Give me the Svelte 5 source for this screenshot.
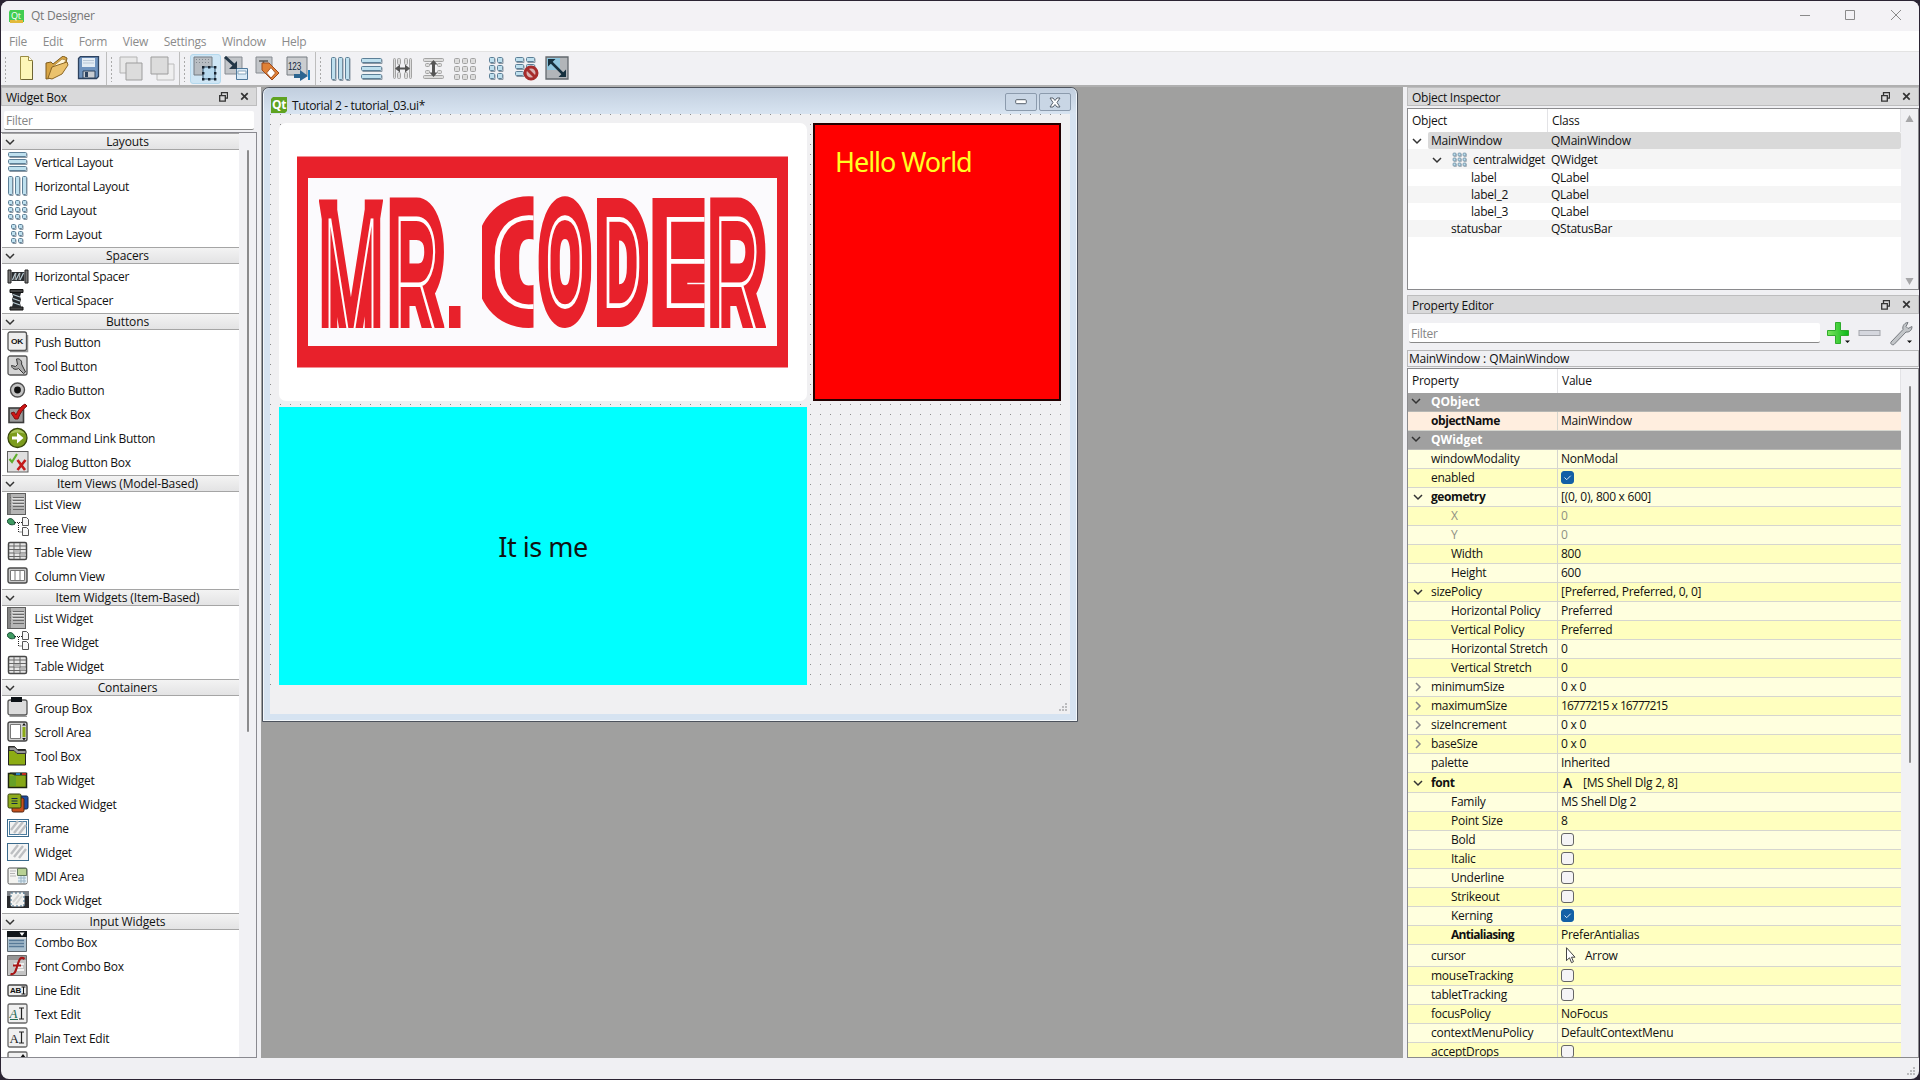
<script>
  const bar = (x, y, w, h) =>
    `<rect x="${x + 0.5}" y="${y + 0.5}" width="${w - 1}" height="${h - 1}" rx="1" fill="#bfe0ee" stroke="#5c7f97"/><path d="M${x + w} ${y + 1.5}v${h - 1}h-${w - 1.5}" fill="none" stroke="#8b98a3"/>`;
  const gbar = (x, y, w, h) =>
    `<rect x="${x + 0.5}" y="${y + 0.5}" width="${w - 1}" height="${h - 1}" rx="1" fill="#dcdcdc" stroke="#a3a3a3"/>`;
  const cells = (xs, ys, fn, w = 6, h = 6) => ys.map((y) => xs.map((x) => fn(x, y, w, h)).join('')).join('');
  const hatch = '<path d="M4 13l7-9M7 16l9-11M12 17l7-9" stroke="#bdbfc2" stroke-width="2.4" fill="none"/>';
  const list =
    '<rect x="0.5" y="0.5" width="18" height="21" fill="#b5b5b5" stroke="#5e5e5e"/><path d="M1 1h3v20H1z" fill="#858585"/><path d="M3 4.5h1m2 0h11M3 7.5h1m2 0h11M3 10.5h1m2 0h11M3 13.5h1m2 0h11M3 16.5h1m2 0h11" stroke="#696969"/><path d="M5 5.5h12M5 8.5h12M5 11.5h12" stroke="#dedede"/>';
  const tree =
    '<path d="M0 4c2-4 7-3 8 3-4 2-7 0-8-3z" fill="#3f9b62" stroke="#174c33"/><path d="M8 5.5h7M11.5 6v9h4" fill="none" stroke="#222" stroke-dasharray="1 1"/><path d="M15.5.5h4l2 2v6h-6zM15.5 10.5h4l2 2v6h-6z" fill="#f7f7f7" stroke="#555"/>';
  const table =
    '<rect x="1.5" y="1.5" width="18" height="17" rx="1.5" fill="#e6e6e6" stroke="#484848" stroke-width="1.5"/><path d="M2 5h17M2 8.5h17M2 12h17M2 15.5h17M7 2v16M13 2v16" stroke="#666"/><path d="M7.5 9h5v3h-5zM13.5 12.5h5v3h-5z" fill="#b9b9b9"/>';

  const icons = {
    vlay: bar(1, 1, 19, 5) + bar(1, 8, 19, 5) + bar(1, 15, 19, 5),
    hlay: bar(1, 1, 5, 19) + bar(8, 1, 5, 19) + bar(15, 1, 5, 19),
    grid: cells([1, 8, 15], [1, 8, 15], bar, 5, 5),
    form: cells([4, 11], [1, 8, 15], bar, 5, 5),
    hspacer:
      '<path d="M1 5h3v13H1zM18 5h3v13h-3z" fill="#777" stroke="#222"/><path d="M4.5 7h13v9h-13z" fill="#2a2d30"/><path d="M5.5 15l3-7M9 15l3.5-7M13 15l3.5-7" stroke="#b7cad2" stroke-width="1.2"/><path d="M8 15l1-7M12 15l1-7" stroke="#fff" stroke-width=".6"/>',
    vspacer:
      '<path d="M3 .5h13v3H3zM3 18h13v3H3z" fill="#444" stroke="#111"/><path d="M5 4h9l-1 3.5 1 3-1 3.5 1 4H5l1-4-1-3.5 1-3z" fill="#26292c"/><path d="M6 5.5l7 2.5M6 9.5l7 2.5M6 13.5l7 2.5" stroke="#b7cad2" stroke-width="1.3"/>',
    push: '<path d="M3 20.5h17.5V4" fill="none" stroke="#999" stroke-width="1.5"/><rect x="1" y="1" width="18.5" height="18.5" rx="2" fill="#ededed" stroke="#555" stroke-width="1.3"/><text x="4" y="12.5" font-size="7.5" font-family="Liberation Sans" font-weight="700" fill="#111" textLength="12" lengthAdjust="spacingAndGlyphs">OK</text>',
    tool: '<rect x="1" y="1" width="19" height="19" rx="2" fill="#d5d5d5" stroke="#555" stroke-width="1.3"/><path d="M9.5 4c3-1 6 2 5 5l4 8-2 1.5-5-5c-3 2-7 0-7-3l4 1 2-2z" fill="#aaa" stroke="#333"/>',
    radio: '<circle cx="10.5" cy="11" r="7" fill="#c4c4c4" stroke="#4f4f4f" stroke-width="1.4"/><circle cx="10.5" cy="11" r="3.4" fill="#111"/>',
    check: '<rect x="2" y="5" width="14.5" height="14.5" fill="#9b9b9b" stroke="#3c3c3c" stroke-width="1.6"/><path d="M4 10l3-1 2 3c2-5 5-9 9-11l2 2c-4 3-7 7-9 13H8z" fill="#cf1414" stroke="#801010"/>',
    command: '<circle cx="10.5" cy="11" r="9.5" fill="#7c9c1c" stroke="#39480c" stroke-width="1.3"/><path d="M3 7c3-6 12-6 15 0-4-2-11-2-15 0z" fill="#a9c35b"/><path d="M5 9.5h5V5.5l6.5 5.5-6.5 5.5v-4H5z" fill="#fff"/>',
    dialog: '<rect x=".5" y=".5" width="20.5" height="20.5" fill="#dfdfdf" stroke="#5e5e5e"/><path d="M2.5 8l2.5 3 5-8" fill="none" stroke="#5fae2c" stroke-width="2.2"/><path d="M10.5 9l7.5 10M18.5 9l-8 10" stroke="#c31b1b" stroke-width="2.6"/>',
    list, tree, table,
    column: '<rect x="1" y="3" width="19" height="15" rx="2" fill="#c9c9c9" stroke="#4b4b4b" stroke-width="1.4"/><path d="M3.5 5.5h14v10h-14z" fill="#fff" stroke="#777"/><path d="M8 5v11M13 5v11" stroke="#777"/>',
    group: '<rect x="1" y="3" width="19" height="15" rx="2" fill="#dcdcdc" stroke="#555" stroke-width="1.3"/><path d="M2.5 19.5H20" stroke="#999"/><path d="M4 0h11v5H4z" fill="#0d1216"/>',
    scroll: '<rect x="1" y="1" width="19" height="19" rx="2" fill="#d2d2d2" stroke="#444" stroke-width="1.4"/><path d="M3.5 3.5h10v14h-10z" fill="#fff" stroke="#777"/><path d="M15.5 6h3v10h-3z" fill="#8cab16"/><path d="M17 2l1.8 2.5h-3.6zM17 19.5l1.8-2.5h-3.6z" fill="#111"/>',
    toolbox: '<path d="M1.5 1.5h6l2 3h9V20h-17z" fill="#8dac14" stroke="#222"/><path d="M2 2h6l3 3.5h8v3h-9l-3-3H2z" fill="#999" stroke="#333"/>',
    tab: '<path d="M1.5 4.5h18v14h-18z" fill="#86a716" stroke="#1d2410" stroke-width="1.5"/><path d="M2.5 3.5h17v3h-12z" fill="#22332d"/><path d="M9 4h4v2H9z" fill="#287fbd"/><path d="M15 4h4v2h-4z" fill="#c22b1d"/><path d="M3 7h6v10H3z" fill="#67a128"/>',
    stack: '<rect x="9" y="3" width="12" height="13" rx="1.5" fill="#1c4ba3" stroke="#142544"/><rect x="5" y="5" width="12" height="14" rx="1.5" fill="#c6501c" stroke="#4f2512"/><rect x="1" y="1" width="13" height="14" rx="1.5" fill="#8fac1c" stroke="#323c0d"/><path d="M4.5 5.5h6M4.5 8h6M4.5 10.5h6" stroke="#132d42"/>',
    frame: `<rect x=".5" y="2.5" width="21" height="17" fill="#fff" stroke="#3a6a8c"/><rect x="2.5" y="4.5" width="17" height="13" fill="#f2f2f2" stroke="#4e7ea0"/>${hatch}`,
    widget: `<rect x=".5" y="2.5" width="21" height="17" fill="#f4f4f4" stroke="#3a6a8c"/>${hatch}`,
    mdi: '<rect x="1" y="3" width="19" height="16" rx="1.5" fill="#f3f3f0" stroke="#555"/><path d="M3 6h6M3 8.5h5M3 11h6" stroke="#b5b5b5"/><path d="M10.5 3.5h9v7h-9z" fill="#b8d194" stroke="#61785a"/><path d="M11 11h9v7h-9z" fill="#e0edf5"/><path d="M11 13h8M11 16h8M14 11v7M17 11v7" stroke="#9bb5c6"/>',
    dock: '<path d="M0 2h22v17H0z" fill="#28292c"/><path d="M0 2h22v5H0z" fill="#7d8085"/><rect x="4" y="4" width="13" height="13" rx="1" fill="#f1f1ef" stroke="#fff"/><rect x="4" y="4" width="13" height="13" fill="none" stroke="#3b6884" stroke-dasharray="2 2"/><path d="M6 13l6-7M9 15l6-8" stroke="#d5d5d3" stroke-width="2"/>',
    combo: '<path d="M.5.5h19v20H.5z" fill="#a9bfce" stroke="#5e686f"/><path d="M0 0h20v6H0z" fill="#12161a"/><path d="M12.5 1.5h5L15 5z" fill="#fff"/><path d="M2 9.5h15M2 12.5h15M2 15.5h15" stroke="#587a98" stroke-width="1.4"/><path d="M1 6h18v2H1z" fill="#dcdcdc"/>',
    fontcombo: '<path d="M.5.5h19v20H.5z" fill="#c4c4c4" stroke="#6b6b6b"/><path d="M1 1h18v4H1z" fill="#969696"/><path d="M7 9h10M8 12h8M9 15h8" stroke="#eee" stroke-width="2"/><path d="M17.5 4c-4-3-5 0-7 6-2 7-3 10-7 9M6 10.5h8" fill="none" stroke="#a81515" stroke-width="2.2"/>',
    line: '<rect x="1" y="6" width="19" height="11" rx="1.5" fill="#ececec" stroke="#444" stroke-width="1.4"/><text x="3" y="14.3" font-size="8" font-family="Liberation Sans" font-weight="700" fill="#111" textLength="11" lengthAdjust="spacingAndGlyphs">AB</text><path d="M14.5 8h4M16.5 8v7M14.5 15h4" stroke="#111"/>',
    textedit: '<rect x="1" y="1" width="19" height="19" rx="1.5" fill="#f0f0f0" stroke="#666" stroke-width="1.3"/><text x="2.5" y="15" font-size="13" font-style="italic" font-family="Liberation Serif" fill="#246b54">A</text><path d="M3 16.5h8" stroke="#246b54"/><path d="M12 5h5M14.5 5v11M12 16h5" stroke="#222" stroke-width="1.2" fill="none"/>',
    plain: '<rect x="1" y="1" width="19" height="19" rx="1.5" fill="#f0f0f0" stroke="#666" stroke-width="1.3"/><text x="2.5" y="15.5" font-size="13" font-family="Liberation Serif" fill="#222">A</text><path d="M12 5h5M14.5 5v11M12 16h5" stroke="#222" stroke-width="1.2" fill="none"/>',
    spin: '<rect x="1" y="1" width="19" height="19" rx="1.5" fill="#f0f0f0" stroke="#666" stroke-width="1.3"/><path d="M16 3l3 4h-6z" fill="#111"/>',

    newfile: '<path d="M6.5.5h8l4 4v19h-12z" fill="#fdf6b8" stroke="#9a8c45"/><path d="M14.5.5v4h4" fill="#fff" stroke="#9a8c45"/><path d="M7.5 23.5h11v-18" fill="none" stroke="#6e6434"/>',
    open: '<path d="M1 7l5-1 2 2 10-8 4 2-2 10-12 10-7 1z" fill="#d8a544" stroke="#7d5b1f"/><path d="M6 12L17 3l4 1-5 9-9 9z" fill="#fff6dc" stroke="#b6924c"/><path d="M3 22l4-11L22 6l1 3-6 9-10 5z" fill="#ebc26d" stroke="#8d6725"/>',
    save: '<path d="M2.5 2.5l2-2h18v20l-2 2h-18z" fill="#6f93bf" stroke="#2d425f" stroke-width="1.3"/><path d="M6 2h13v9H6z" fill="#e3ecf5"/><path d="M7 4.5h11M7 7h11" stroke="#b8c6d6"/><path d="M7 15h12v7H7z" fill="#c8ccd2" stroke="#2d425f"/><path d="M9 16h3v5H9z" fill="#2d425f"/>',
    back: '<path d="M1 1h17v16H1z" fill="#e8e8e8" stroke="#b3b3b3"/><path d="M7 7h16v17H7z" fill="#dcdcdc" stroke="#9d9d9d"/>',
    front: '<path d="M7 8h17v16H7z" fill="#efefef" stroke="#bcbcbc"/><path d="M1 1h17v17H1z" fill="#dcdcdc" stroke="#9d9d9d"/>',
    edit: '<path d="M1 1h18v18H1z" fill="#b8bdc2" stroke="#747c84"/><path d="M3 3.5h14M3 6.5h14" stroke="#80888f" stroke-dasharray="1 2"/><path d="M10 11h12v12H10z" fill="#b7d9ee" stroke="#31506b"/><path d="M9 10h2.4v2.4H9zM15 10h2.4v2.4H15zM21 10h2.4v2.4H21zM9 16h2.4v2.4H9zM21 16h2.4v2.4H21zM9 22h2.4v2.4H9zM15 22h2.4v2.4H15zM21 22h2.4v2.4H21z" fill="#16212d"/>',
    signal: '<path d="M1 1h17v17H1z" fill="#c2c5c9" stroke="#868b91"/><path d="M12.5 12.5h11v11h-11z" fill="#d8eaf7" stroke="#50799b"/><path d="M14 15h8v3h-8z" fill="#fff" stroke="#86a5bc"/><path d="M1 1l10 9" stroke="#243747" stroke-width="3"/><path d="M13 5v8H5z" fill="#243747"/>',
    buddy: '<path d="M1 1h16v16H1z" fill="#c2c5c9" stroke="#868b91"/><path d="M4 5h9M8.5 5v7" stroke="#555" stroke-width="1.5"/><path d="M7 7h7l10 10-7 7L7 14z" fill="#df8137" stroke="#9b4a1e"/><path d="M16 11.5l4.5 5.5-4.5 5-4.5-5z" fill="#fff" stroke="#ab5a29"/>',
    taborder: '<path d="M1 1h20v18H1z" fill="#cbcdd0" stroke="#777c82"/><text x="2" y="14" font-size="10" font-family="Liberation Sans" fill="#12293d" textLength="13" lengthAdjust="spacingAndGlyphs">123</text><path d="M8 20h10" stroke="#2c6590" stroke-width="4"/><path d="M14 14l8 6-8 5z" fill="#2c6590"/><path d="M22 14h2v10h-2z" fill="#2180bd"/>',
    th: bar(3, 1, 5, 23) + bar(10, 1, 5, 23) + bar(17, 1, 5, 23),
    tv: bar(2, 2, 21, 5) + bar(2, 10, 21, 5) + bar(2, 18, 21, 5),
    splith: gbar(3, 2, 3, 21) + gbar(7, 2, 4, 7) + gbar(7, 16, 4, 7) + gbar(14, 2, 4, 7) + gbar(14, 16, 4, 7) + gbar(19, 2, 3, 21) + '<path d="M5 12.5l5-4v3h5v-3l5 4-5 4v-3h-5v3z" fill="#555"/>',
    splitv: gbar(2, 2, 21, 4) + gbar(2, 19, 21, 4) + gbar(4, 7, 5, 4) + gbar(16, 7, 5, 4) + gbar(4, 14, 5, 4) + gbar(16, 14, 5, 4) + '<path d="M12.5 4l4 4.5h-2.5v8h2.5l-4 4.5-4-4.5h2.5v-8h-2.5z" fill="#555"/>',
    tgrid: cells([2, 10, 18], [2, 10, 18], gbar, 6, 6),
    tform: cells([6, 14], [1, 9, 17], bar, 6, 6),
    breaklay: bar(1, 1, 9, 5) + bar(12, 1, 9, 5) + bar(1, 8, 9, 5) + bar(12, 8, 9, 5) + bar(1, 15, 9, 5) + '<circle cx="17" cy="17" r="6" fill="#d9b1b1" stroke="#a72c2c" stroke-width="3"/><path d="M13 13l8 8" stroke="#a72c2c" stroke-width="3"/>',
    adjust: '<path d="M1 1h22v22H1z" fill="#b2b5b9" stroke="#63686d" stroke-width="1.3"/><path d="M2 2h13v12H2z" fill="#8fc5dd"/><path d="M6 6l12 12" stroke="#16303e" stroke-width="2.5"/><path d="M3 3h7.5L3 10.5zM21 21h-7.5l7.5-7.5z" fill="#16303e"/>',
  };

  const menus = ['File', 'Edit', 'Form', 'View', 'Settings', 'Window', 'Help'];
  const tools = [
    ['newfile', 'open', 'save'],
    ['back', 'front'],
    ['edit', 'signal', 'buddy', 'taborder'],
    ['th', 'tv', 'splith', 'splitv', 'tgrid', 'tform', 'breaklay', 'adjust'],
  ];
  const sections = [
    ['Layouts', [['vlay', 'Vertical Layout'], ['hlay', 'Horizontal Layout'], ['grid', 'Grid Layout'], ['form', 'Form Layout']]],
    ['Spacers', [['hspacer', 'Horizontal Spacer'], ['vspacer', 'Vertical Spacer']]],
    ['Buttons', [['push', 'Push Button'], ['tool', 'Tool Button'], ['radio', 'Radio Button'], ['check', 'Check Box'], ['command', 'Command Link Button'], ['dialog', 'Dialog Button Box']]],
    ['Item Views (Model-Based)', [['list', 'List View'], ['tree', 'Tree View'], ['table', 'Table View'], ['column', 'Column View']]],
    ['Item Widgets (Item-Based)', [['list', 'List Widget'], ['tree', 'Tree Widget'], ['table', 'Table Widget']]],
    ['Containers', [['group', 'Group Box'], ['scroll', 'Scroll Area'], ['toolbox', 'Tool Box'], ['tab', 'Tab Widget'], ['stack', 'Stacked Widget'], ['frame', 'Frame'], ['widget', 'Widget'], ['mdi', 'MDI Area'], ['dock', 'Dock Widget']]],
    ['Input Widgets', [['combo', 'Combo Box'], ['fontcombo', 'Font Combo Box'], ['line', 'Line Edit'], ['textedit', 'Text Edit'], ['plain', 'Plain Text Edit'], ['spin', '']]],
  ];
  const objects = [
    { name: 'centralwidget', cls: 'QWidget', kind: 'central' },
    { name: 'label', cls: 'QLabel', kind: 'leaf' },
    { name: 'label_2', cls: 'QLabel', kind: 'leaf' },
    { name: 'label_3', cls: 'QLabel', kind: 'leaf' },
    { name: 'statusbar', cls: 'QStatusBar', kind: 'status' },
  ];
  // o: 1 expanded, 2 collapsed; l: nesting level; c: checkbox state
  const props = [
    { n: 'windowModality', v: 'NonModal' }, { n: 'enabled', c: true },
    { n: 'geometry', v: '[(0, 0), 800 x 600]', o: 1, b: true },
    { n: 'X', v: '0', l: 2, dim: true }, { n: 'Y', v: '0', l: 2, dim: true },
    { n: 'Width', v: '800', l: 2 }, { n: 'Height', v: '600', l: 2 },
    { n: 'sizePolicy', v: '[Preferred, Preferred, 0, 0]', o: 1 },
    { n: 'Horizontal Policy', v: 'Preferred', l: 2 }, { n: 'Vertical Policy', v: 'Preferred', l: 2 },
    { n: 'Horizontal Stretch', v: '0', l: 2 }, { n: 'Vertical Stretch', v: '0', l: 2 },
    { n: 'minimumSize', v: '0 x 0', o: 2 }, { n: 'maximumSize', v: '16777215 x 16777215', o: 2, k: 'digits' },
    { n: 'sizeIncrement', v: '0 x 0', o: 2 }, { n: 'baseSize', v: '0 x 0', o: 2 },
    { n: 'palette', v: 'Inherited' },
    { n: 'font', v: '[MS Shell Dlg 2, 8]', o: 1, b: true, k: 'fontrow' },
    { n: 'Family', v: 'MS Shell Dlg 2', l: 2 }, { n: 'Point Size', v: '8', l: 2 },
    { n: 'Bold', c: false, l: 2 }, { n: 'Italic', c: false, l: 2 }, { n: 'Underline', c: false, l: 2 },
    { n: 'Strikeout', c: false, l: 2 }, { n: 'Kerning', c: true, l: 2 },
    { n: 'Antialiasing', v: 'PreferAntialias', l: 2, b: true },
    { n: 'cursor', v: 'Arrow', k: 'cursorrow' },
    { n: 'mouseTracking', c: false }, { n: 'tabletTracking', c: false },
    { n: 'focusPolicy', v: 'NoFocus' }, { n: 'contextMenuPolicy', v: 'DefaultContextMenu' },
    { n: 'acceptDrops', c: false },
  ];
  // Banner letters: box x and width, then text x, drawn width, baseline and size
  const letters = [
    { t: 'M', x: 40, w: 64, tx: 3, tw: 58, y: 78, s: 94, thin: true },
    { t: 'R', x: 109, w: 56.5, tx: 3, tw: 52, y: 72, s: 86, thin: true },
    { t: 'C', x: 203, w: 51.5, tx: 4, tw: 84, y: 56, s: 64 },
    { t: 'O', x: 259, w: 53.5, tx: 6, tw: 42, y: 56, s: 64 },
    { t: 'D', x: 317.5, w: 51.5, tx: 4, tw: 43, y: 56, s: 64 },
    { t: 'E', x: 373.5, w: 52, tx: 4, tw: 62, y: 56, s: 64 },
    { t: 'R', x: 429.5, w: 57.5, tx: 3, tw: 53, y: 72, s: 86, thin: true },
  ];
</script>

{#snippet chevron(open)}
  <svg class="chev" class:closed={!open} viewBox="0 0 10 10" width="10" height="10"><path d="M1 3l4 4 4-4" /></svg>
{/snippet}

{#snippet dockTitle(label)}
  <div class="dock-title">
    <span>{label}</span>
    <svg width="9" height="10" viewBox="0 0 9 10"><path d="M2.5 3V.7h6v5.5H6.5M.7 3.7h5.6v5.5H.7z" fill="none" stroke="#333" stroke-width="1.3" /></svg>
    <svg class="x" width="9" height="9" viewBox="0 0 9 9"><path d="M1.2 1.2l6.5 6.5M7.7 1.2L1.2 7.7" stroke="#333" stroke-width="1.7" /></svg>
  </div>
{/snippet}

{#snippet box(on)}
  <span class="box" class:on>
    {#if on}<svg width="11" height="11" viewBox="0 0 11 11"><path d="M2.5 5.5l2.2 2.2 4-4" fill="none" stroke="#dceaf6" /></svg>{/if}
  </span>
{/snippet}

<div class="app">
  <header class="titlebar">
    <svg class="qt" width="15" height="14" viewBox="0 0 15 14"><path d="M1 1h14v12H0V3z" fill="#41cd52" /><path d="M1 11h13v3H1z" fill="#e2b93a" /><text x="2" y="9.5" font-size="9" font-family="Open Sans" fill="#fff">Qt</text></svg>
    <span>Qt Designer</span>
    <svg class="winctl" width="104" height="12" viewBox="0 0 104 12"><path d="M0 6.5h10M45.5 1.5h9v9h-9zM91 1l10 10M101 1L91 11" fill="none" stroke="#8a8a8a" /></svg>
  </header>
  <nav class="menubar">{#each menus as m}<span>{m}</span>{/each}</nav>
  <div class="toolbar">
    {#each tools as g}
      <div class="group">
        <i class="handle"></i>
        {#each g as t}
          <span class="tool" class:active={t === 'edit'}><svg width="25" height="25" viewBox="0 0 25 25">{@html icons[t]}</svg></span>
        {/each}
      </div>
    {/each}
  </div>

  <main>
    <aside class="left">
      {@render dockTitle('Widget Box')}
      <div class="filter">Filter</div>
      <div class="widgets">
        <div class="wlist">
          {#each sections as [title, items]}
            <div class="whead">{@render chevron(true)}<span>{title}</span></div>
            {#each items as [ic, label]}
              <div class="witem"><svg width="22" height="22" viewBox="0 0 22 22">{@html icons[ic]}</svg><span>{label}</span></div>
            {/each}
          {/each}
        </div>
        <div class="scroll"><i></i></div>
      </div>
    </aside>

    <section class="mdi">
      <div class="win">
        <div class="wtitle">
          <svg width="16" height="16" viewBox="0 0 16 16"><path d="M2 0h14v14l-2 2H0V2z" fill="#5fa321" /><text x="1" y="12" font-size="12" font-weight="700" font-family="Open Sans" fill="#fff" textLength="14" lengthAdjust="spacingAndGlyphs">Qt</text></svg>
          <span>Tutorial 2 - tutorial_03.ui*</span>
          <div class="wbtns">
            <b><svg width="12" height="6" viewBox="0 0 12 6"><rect x=".7" y=".7" width="10.6" height="4" rx="1" fill="#fff" stroke="#56606c" /></svg></b>
            <b><svg width="12" height="11" viewBox="0 0 12 11"><path d="M1 1h3l2 2.5L8 1h3L8 5.5l3 4.5H8L6 7.5 4 10H1l3-4.5z" fill="#fff" stroke="#56606c" /></svg></b>
          </div>
        </div>
        <div class="canvas">
          <div class="form">
            <div class="logo">
              <svg width="528" height="278" viewBox="0 0 528 278">
                <rect x="23.5" y="39" width="480" height="200" fill="#fbfafd" stroke="none" />
                <path d="M18 33.5h491v211H18zM29 55v168h469V55z" fill="#e8212b" fill-rule="evenodd" />
                {#each letters as l}
                  <svg x={l.x} y="73" width={l.w} height="132" viewBox="0 0 {l.w} 66" preserveAspectRatio="none">
                    <text class:thin={l.thin} x={l.tx} y={l.y} font-size={l.s} textLength={l.tw} lengthAdjust="spacingAndGlyphs">{l.t}</text>
                  </svg>
                {/each}
                <rect x="170" y="183" width="11.5" height="22" fill="#e8212b" />
              </svg>
            </div>
            <div class="hello">Hello World</div>
            <div class="me">It is me</div>
          </div>
          <svg class="grip" width="9" height="9" viewBox="0 0 9 9"><path d="M6 0h2v2H6zM3 3h2v2H3zM6 3h2v2H6zM0 6h2v2H0zM3 6h2v2H3zM6 6h2v2H6z" /></svg>
        </div>
      </div>
    </section>

    <aside class="right">
      {@render dockTitle('Object Inspector')}
      <div class="tree">
        <div class="tbody">
          <div class="thead"><span>Object</span><span>Class</span></div>
          <div class="trow selected"><span class="exp">{@render chevron(true)}</span><div class="sel"><span>MainWindow</span><span>QMainWindow</span></div></div>
          {#each objects as o}
            <div class="trow {o.kind}">
              <span class="oname">
                {#if o.kind === 'central'}{@render chevron(true)}<svg class="mini" width="15" height="15" viewBox="0 0 21 21">{@html icons.grid}</svg>{/if}
                {o.name}
              </span>
              <span>{o.cls}</span>
            </div>
          {/each}
        </div>
        <div class="arrows"><svg width="9" height="7" viewBox="0 0 9 7"><path d="M4.5 0L8.5 7h-8z" /></svg><svg width="9" height="7" viewBox="0 0 9 7"><path d="M4.5 7L.5 0h8z" /></svg></div>
      </div>
      <div class="gap"></div>
      {@render dockTitle('Property Editor')}
      <div class="ptools">
        <div class="filter">Filter</div>
        <svg width="92" height="28" viewBox="0 0 92 28">
          <defs><linearGradient id="plus" x2="1"><stop stop-color="#7ce65e" /><stop offset="1" stop-color="#0ab818" /></linearGradient></defs>
          <path d="M8.5 3.5h5v8h8v5h-8v8h-5v-8h-8v-5h8z" fill="url(#plus)" stroke="#2eab2b" />
          <path d="M18 21.5h5L20.5 24zM80 21.5h5L82.5 24z" fill="#111" />
          <rect x="32" y="11.5" width="21" height="5" fill="#d5d7de" stroke="#a4a6ac" />
          <path d="M64 23L76 10.5c-1-4 2-7 5-7l-2 4 2 2 4-2c0 4-3 6-6 5.5L67 25.5c-2 1-4-1-3-2.5z" fill="#c2c5c8" stroke="#777b80" />
        </svg>
      </div>
      <div class="objname">MainWindow : QMainWindow</div>
      <div class="prop">
        <div class="pbody">
          <div class="phead"><span>Property</span><span>Value</span></div>
          <div class="cat">{@render chevron(true)}<b>QObject</b></div>
          <div class="prow peach"><span class="pn bold">objectName</span><span class="pv">MainWindow</span></div>
          <div class="cat">{@render chevron(true)}<b>QWidget</b></div>
          {#each props as p, i}
            <div class="prow {p.k ?? ''}" class:dark={i % 2 === 1} class:dim={p.dim}>
              <span class="pn" class:bold={p.b} class:sub={p.l === 2}>
                {#if p.o}<i class="pexp">{@render chevron(p.o === 1)}</i>{/if}{p.n}
              </span>
              <span class="pv">
                {#if p.c !== undefined}{@render box(p.c)}{/if}
                {#if p.k === 'fontrow'}<strong>A</strong>{/if}
                {#if p.k === 'cursorrow'}<svg width="19" height="17" viewBox="0 0 19 17"><path d="M5.5.7v13l3-3 2 5 2-1-2-4.5h3.5z" fill="#fff" stroke="#444" /></svg>{/if}
                {p.v ?? ''}
              </span>
            </div>
          {/each}
        </div>
        <div class="scroll"><i></i></div>
      </div>
    </aside>
  </main>
  <footer><svg width="9" height="9" viewBox="0 0 9 9"><path d="M6 0h2v2H6zM3 3h2v2H3zM6 3h2v2H6zM0 6h2v2H0zM3 6h2v2H3zM6 6h2v2H6z" /></svg></footer>
</div>

<style>
  :global(body) { background: #2b2433; overflow: hidden; }
  .app, .app * { box-sizing: border-box; }
  .app {
    width: 1918px; height: 1078px; margin: 1px; border-radius: 8px; overflow: hidden;
    display: flex; flex-direction: column; background: #f0f0f3;
    font: 12px/16px 'Open Sans', 'Noto Sans', sans-serif; letter-spacing: -0.25px; color: #111; white-space: nowrap;
  }
  svg { display: block; flex: none; }
  i { font-style: normal; }
  .titlebar { height: 30px; flex: none; display: flex; align-items: center; padding: 0 15px 0 8px; background: #f3f2f5; color: #777; }
  .titlebar span { margin-left: 7px; flex: 1; letter-spacing: -0.25px; }
  .titlebar .winctl { margin-top: -2px; }
  .menubar { height: 21px; flex: none; display: flex; align-items: center; gap: 15.7px; padding: 2px 0 0 8px; background: #fefefe; color: #8b8b8b; border-bottom: 1px solid #e3e3e3; }
  .toolbar { height: 35px; flex: none; display: flex; background: #f1f1f4; border-bottom: 2px solid #b0b0b0; }
  .group { display: flex; align-items: center; padding-right: 1px; border-right: 1px solid #bdbdbd; }
  .group:first-child { padding-right: 2px; }
  .group:last-child { border: 0; }
  .handle { width: 9.5px; height: 26px; background: radial-gradient(circle, #aaa 0.9px, transparent 1.1px) 2px 0 / 5px 4px repeat-y; }
  .tool { width: 31px; height: 30px; display: grid; place-items: center; }
  .tool.active { background: #cfe6f5; border: 1px solid #b4d9ee; border-radius: 3px; }
  main { flex: 1; min-height: 0; display: flex; }
  footer { height: 21px; flex: none; display: flex; justify-content: flex-end; align-items: flex-end; padding: 0 3px 3px; }
  footer path, .grip path { fill: #bcbcbe; }

  .dock-title { height: 19px; flex: none; display: flex; align-items: center; padding: 0 7px 0 4px; background: #d9d9da; border: 1px solid #bdbdbe; }
  .dock-title span { flex: 1; padding-top: 2px; }
  .dock-title .x { margin-left: 12px; }
  .filter { background: #fff; border-bottom: 1px solid #898989; border-radius: 2px; color: #858585; padding: 2px 0 0 2px; display: flex; align-items: center; }
  .chev { fill: none; stroke: #333; stroke-width: 1.5; }
  .chev.closed { transform: rotate(-90deg); stroke: #888; }
  .scroll { background: #f1f1f4; display: flex; }
  .scroll i { width: 2px; background: #8b8b8d; border-radius: 1px; }

  .left { width: 260px; display: flex; flex-direction: column; padding-right: 4px; }
  .left .filter { height: 19px; margin: 5px 3px 2px; flex: none; }
  .widgets { flex: 1; min-height: 0; display: flex; border: 1px solid #8a8a90; border-left: 0; background: #fff; }
  .wlist { width: 238px; overflow: hidden; padding-left: 1px; }
  .whead { height: 17px; margin-bottom: 1px; border-top: 1px solid #a5a5a5; border-bottom: 1px solid #a5a5a5; background: linear-gradient(#f3f3f3, #e3e3e4); display: flex; align-items: center; padding-left: 3px; }
  .whead span { flex: 1; text-align: center; padding: 1px 0 0 1px; letter-spacing: -0.12px; }
  .witem { height: 24px; display: flex; align-items: center; gap: 5.5px; padding-left: 5px; letter-spacing: -0.27px; }
  .witem svg { margin-top: -2px; }
  .widgets .scroll { flex: 1; padding: 17px 0 0 8px; }
  .widgets .scroll i { height: 582px; }

  .mdi { width: 1142px; background: #a0a09f; }
  .win { width: 816px; height: 635px; display: flex; flex-direction: column; border: 1px solid #4c525c; border-radius: 7px 7px 0 0; background: #d6e3f1; box-shadow: inset 0 0 0 1px #f2f7fb; margin-left: 1px; }
  .wtitle { height: 26px; margin: 0 1px; display: flex; align-items: center; padding: 2px 5px 0 7px; background: linear-gradient(#c1cede, #d8e4f1); border-radius: 6px 6px 0 0; flex: none; letter-spacing: -0.36px; }
  .wtitle svg { margin-top: 5px; }
  .wtitle .wbtns svg { margin-top: 0; }
  .wtitle > span { margin: 7px 0 0 5px; flex: 1; }
  .wbtns { display: flex; gap: 2px; }
  .wbtns b { width: 32px; height: 18px; border: 1px solid #8c9bad; border-radius: 2px; display: grid; place-items: center; background: #c9d6e5; }
  .canvas { height: 600px; margin: 0 7px; background: #f0f0f2; position: relative; }
  .form { height: 571px; width: 791px; padding: 9px 0 0 9px; display: grid; grid-template: 278px 278px / 528px 248px; gap: 6px; background: radial-gradient(circle at 0.5px 0.5px, #8c8c8c 0.7px, transparent 0.9px) 0 0 / 10px 10px; }
  .logo { background: #fff; border-radius: 7px; }
  /* Wide outline below a light fill gives each letter its inline stripe */
  .logo text { font-family: Roboto, sans-serif; font-weight: 200; letter-spacing: 0; fill: #fff; stroke: #e8212b; stroke-width: 19px; paint-order: stroke; }
  .logo .thin { font-weight: 100; }
  .hello { background: #f00; border: 2px solid #200; color: #ff2; padding: 20px 20px; font: 27px/34px 'Noto Sans', sans-serif; letter-spacing: -1.05px; }
  .me { background: #0ff; display: grid; place-items: center; padding-top: 2px; font: 27px/34px 'Noto Sans', sans-serif; letter-spacing: -0.5px; }
  .grip { position: absolute; right: 2px; bottom: 2px; }

  .right { width: 516px; display: flex; flex-direction: column; padding-left: 4px; }
  .tree { height: 182px; margin-top: 2px; flex: none; display: flex; background: #fff; border: 1px solid #8a8a8d; }
  .tbody { width: 493px; }
  .thead { height: 23px; display: flex; align-items: center; }
  .thead span { width: 140px; height: 100%; padding: 4px 0 0 4px; border-right: 1px solid #e3e3e6; }
  .thead span:last-child { flex: 1; }
  .trow { height: 17px; display: flex; align-items: center; }
  .trow.central { height: 20px; padding-top: 1px; }
  .trow:nth-child(odd) { background: #f5f5f5; }
  .trow.selected { background: #fff; }
  .exp { width: 20px; padding-left: 4px; }
  .sel { flex: 1; height: 17px; display: flex; align-items: center; background: #d9d9d9; border-radius: 2px; padding-left: 3px; }
  .sel span:first-child { width: 120px; }
  .oname { width: 143px; padding-left: 63px; display: flex; align-items: center; }
  .central .oname { padding-left: 24px; letter-spacing: -0.3px; }
  .mini { margin: 0 6px 0 10px; }
  .status .oname { padding-left: 43px; }
  .arrows { flex: 1; background: #f0f0f3; display: flex; flex-direction: column; justify-content: space-between; align-items: center; padding: 6px 0 4px; }
  .arrows path { fill: #a6a6a8; }
  .gap { height: 5px; flex: none; }
  .ptools { height: 36px; flex: none; display: flex; align-items: center; padding: 2px 0 0 2px; gap: 7px; }
  .ptools .filter { width: 413px; height: 20px; }
  .objname { height: 17px; flex: none; border: 1px solid #b9b9ba; padding-left: 1px; letter-spacing: -0.25px; word-spacing: 0.5px; line-height: 16px; }
  .prop { flex: 1; min-height: 0; margin-top: 1px; display: flex; border: 1px solid #8a8a8d; background: #fff; }
  .pbody { width: 493px; overflow: hidden; }
  .phead { height: 24px; display: flex; }
  .phead span { width: 150px; padding: 4px 0 0 4px; border-right: 1px solid #e3e3e6; }
  .phead span:last-child { flex: 1; }
  .cat { height: 19px; background: #a0a0a0; border-bottom: 1px solid #b6b6b3; color: #fff; display: flex; align-items: center; padding-left: 3px; gap: 10px; letter-spacing: 0; }
  .cat :global(svg) { margin-top: -3px; }
  .prow { height: 19px; display: flex; border-bottom: 1px solid #d6d6cf; background: #ffffde; }
  .prow.dark { background: #ffffbf; }
  .prow.peach { background: #ffeedf; }
  .prow.dim { color: #8f8f83; }
  .pn { width: 150px; padding-left: 23px; border-right: 1px solid #d6d6cf; display: flex; align-items: center; flex: none; }
  .pn.sub { padding-left: 43px; }
  .bold { font-weight: 700; letter-spacing: -0.42px; }
  .sub.bold { letter-spacing: -0.7px; }
  .pexp { width: 18px; margin-left: -18px; }
  .pv { padding-left: 3px; display: flex; align-items: center; }
  .digits .pv { letter-spacing: -0.95px; word-spacing: 1px; }
  .fontrow { height: 20px; }
  .cursorrow { height: 22px; }
  .fontrow strong { font: 600 14px/18px 'Open Sans', sans-serif; width: 22px; padding-left: 2px; }
  .cursorrow svg { margin-right: 5px; }
  .box { width: 13px; height: 13px; border: 1px solid #666; border-radius: 3px; background: #f5f4f6; display: grid; place-items: center; }
  .prow .box { margin-top: -1px; }
  .box.on { background: #1360a6; border-color: #1360a6; }
  .prop .scroll { flex: 1; padding: 17px 0 0 8px; }
  .prop .scroll i { height: 377px; }
</style>
